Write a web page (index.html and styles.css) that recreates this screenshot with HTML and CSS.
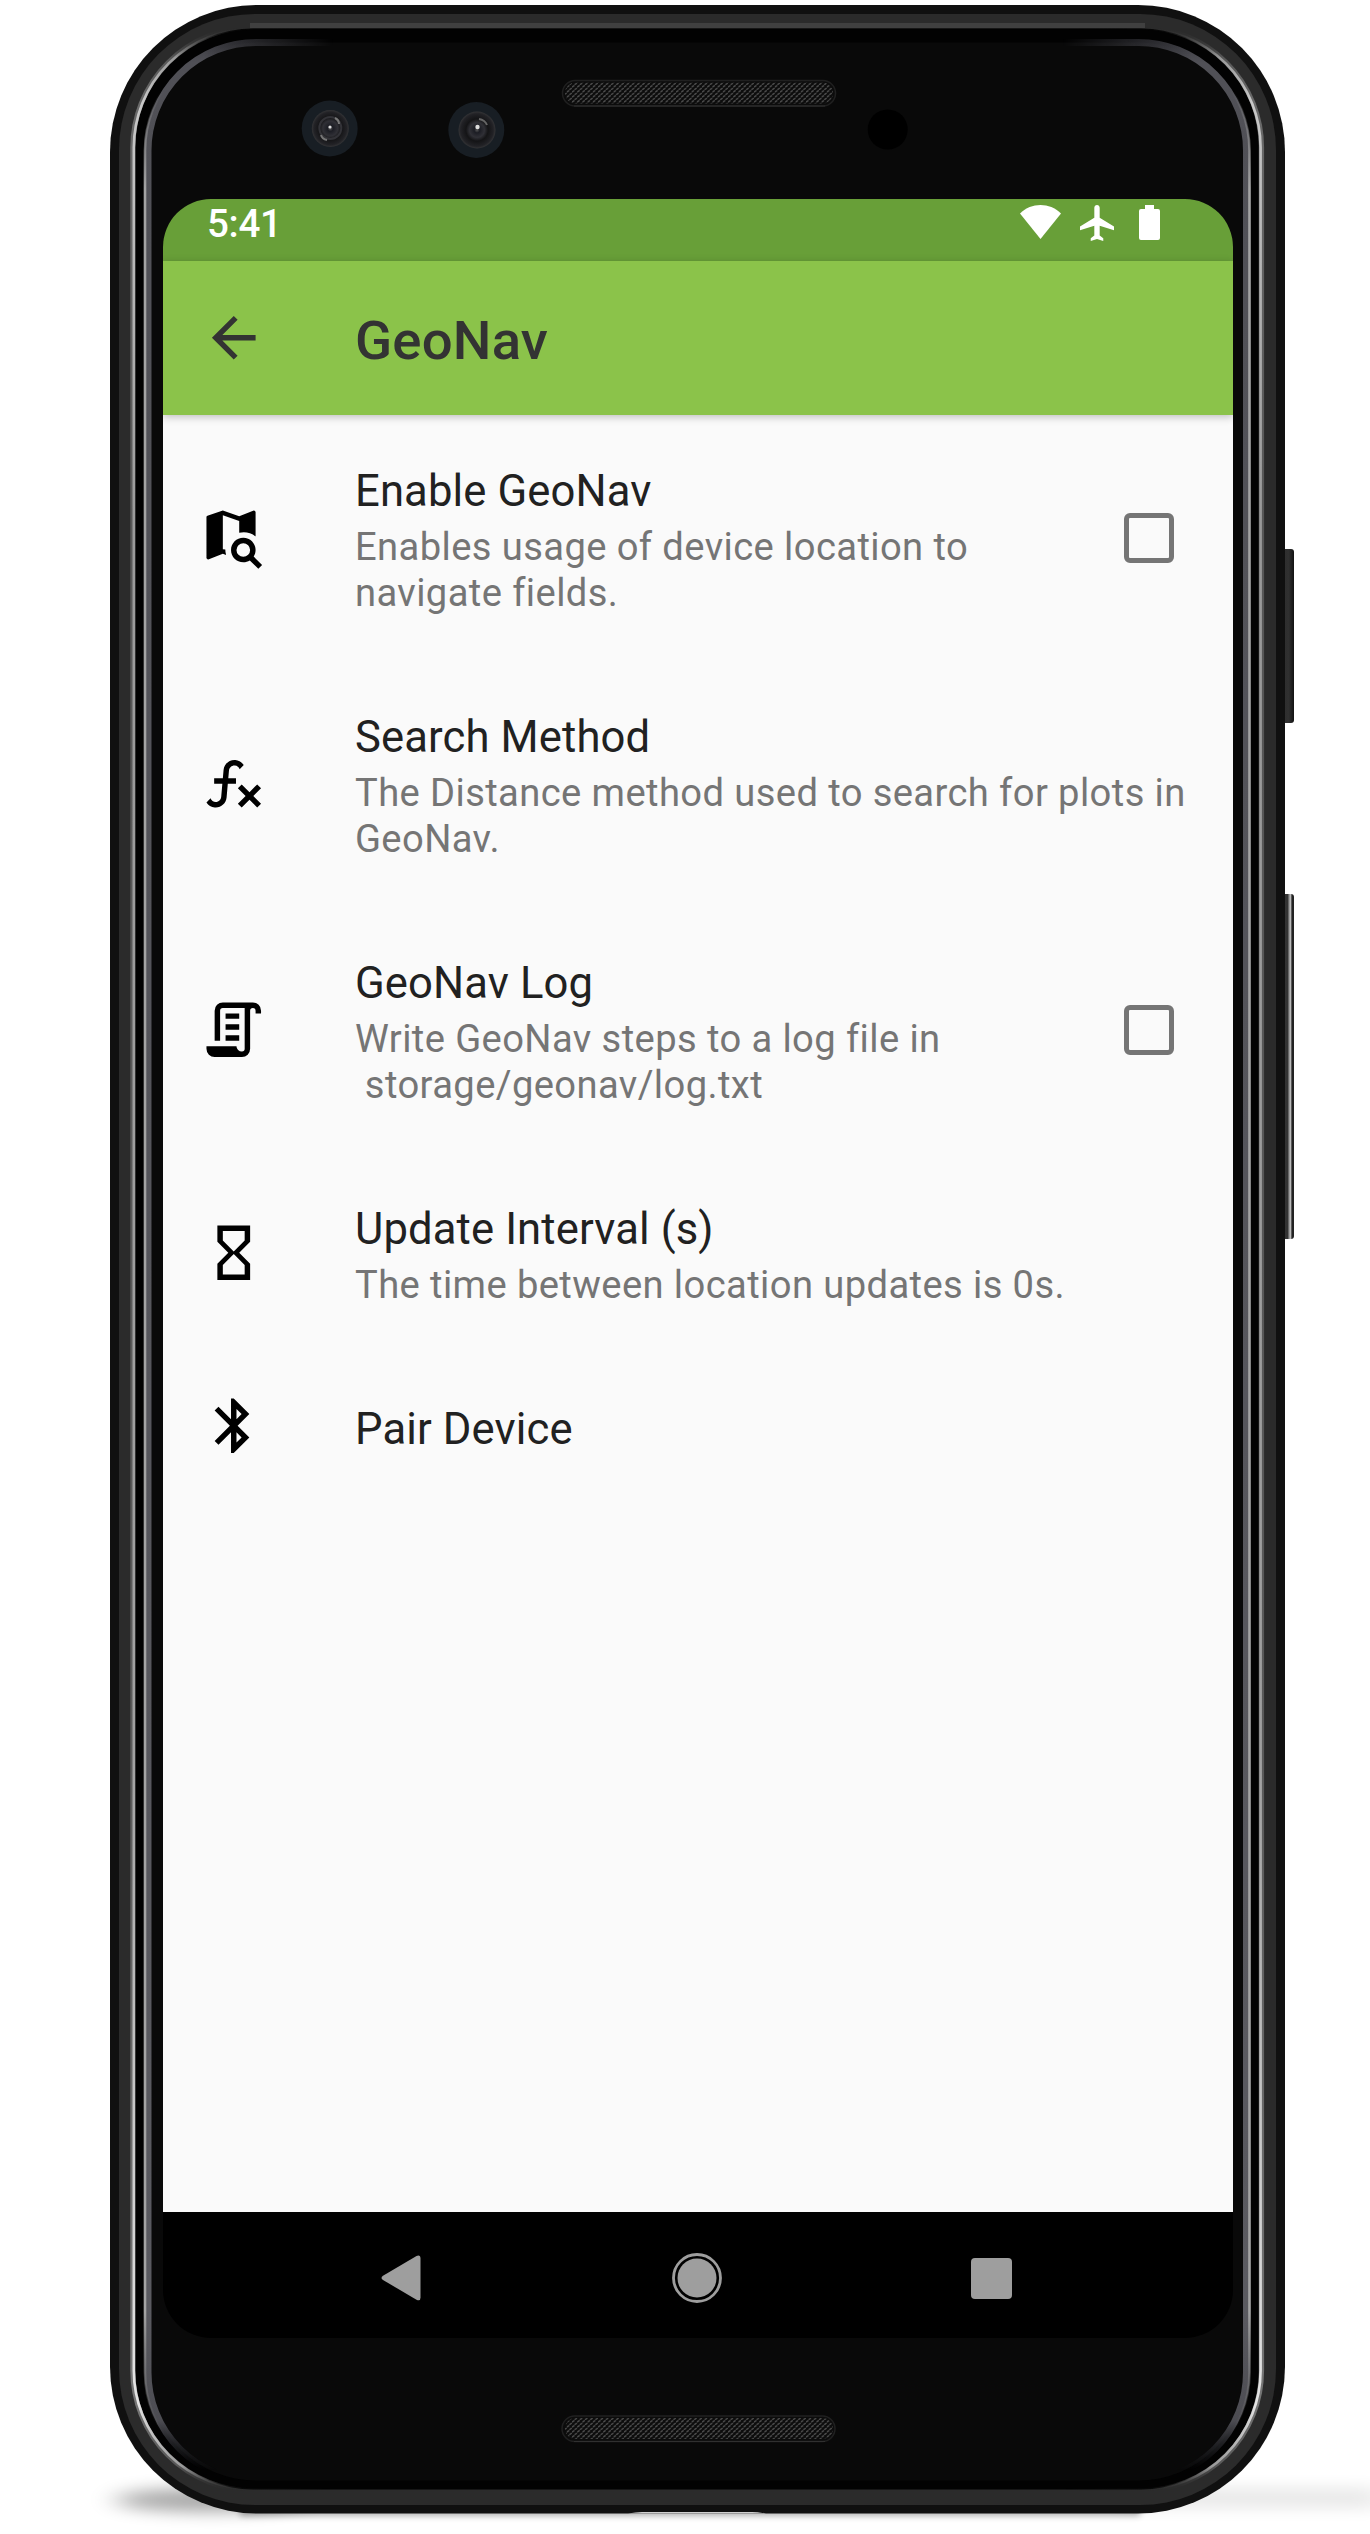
FILE: index.html
```html
<!DOCTYPE html>
<html lang="en">
<head>
<meta charset="utf-8">
<title>GeoNav</title>
<link rel="stylesheet" href="styles.css">
</head>
<body>
<div class="stage">
  <svg class="hardware" viewBox="0 0 1370 2534" aria-hidden="true">
    <defs>
      <linearGradient id="rim" gradientUnits="userSpaceOnUse" x1="0" y1="28" x2="0" y2="2491">
        <stop offset="0" stop-color="#444" stop-opacity="0"/>
        <stop offset=".012" stop-color="#999"/>
        <stop offset=".03" stop-color="#c8c8c8"/>
        <stop offset=".12" stop-color="#b0b0b0"/>
        <stop offset=".2" stop-color="#999"/>
        <stop offset=".7" stop-color="#a0a0a0"/>
        <stop offset=".85" stop-color="#c8c8c8"/>
        <stop offset=".965" stop-color="#e4e4e4"/>
        <stop offset=".99" stop-color="#999"/>
        <stop offset="1" stop-color="#444" stop-opacity="0"/>
      </linearGradient>
      <linearGradient id="glass" gradientUnits="userSpaceOnUse" x1="0" y1="38" x2="0" y2="2482">
        <stop offset="0" stop-color="#38383e"/>
        <stop offset=".01" stop-color="#505056"/>
        <stop offset=".93" stop-color="#5a5a60"/>
        <stop offset=".975" stop-color="#4c4c52"/>
        <stop offset=".995" stop-color="#22242a" stop-opacity="0"/>
      </linearGradient>
      <linearGradient id="glassEdge" gradientUnits="userSpaceOnUse" x1="0" y1="42" x2="0" y2="2482">
        <stop offset=".02" stop-color="#aaa" stop-opacity="0"/>
        <stop offset=".06" stop-color="#a4a4a4"/>
        <stop offset=".93" stop-color="#a4a4a4"/>
        <stop offset=".98" stop-color="#777" stop-opacity="0"/>
      </linearGradient>
      <linearGradient id="sides" gradientUnits="userSpaceOnUse" x1="110" y1="0" x2="1286" y2="0">
        <stop offset=".08" stop-color="#fff"/>
        <stop offset=".19" stop-color="#000"/>
        <stop offset=".81" stop-color="#000"/>
        <stop offset=".92" stop-color="#fff"/>
      </linearGradient>
      <mask id="sideMask" maskUnits="userSpaceOnUse" x="0" y="0" width="1370" height="2534">
        <rect width="1370" height="2534" fill="url(#sides)"/>
      </mask>
      <linearGradient id="button" x1="0" x2="1"><stop offset="0" stop-color="#2c2c2c"/><stop offset=".6" stop-color="#303030"/><stop offset="1" stop-color="#111"/></linearGradient>
      <linearGradient id="buttonLit" x1="0" x2="1"><stop offset="0" stop-color="#303030"/><stop offset=".5" stop-color="#333"/><stop offset=".72" stop-color="#c8c8c8"/><stop offset=".85" stop-color="#222"/><stop offset="1" stop-color="#222"/></linearGradient>
      <radialGradient id="lens"><stop offset="0" stop-color="#555"/><stop offset=".15" stop-color="#1c1d24"/><stop offset=".4" stop-color="#303036"/><stop offset=".6" stop-color="#141416"/><stop offset=".88" stop-color="#222226"/><stop offset="1" stop-color="#343436"/></radialGradient>
      <pattern id="mesh" width="5.2" height="5" patternUnits="userSpaceOnUse">
        <path d="M0 2.2 2.4.4M2.6 4.8 5 3" stroke="#4c4c4c" stroke-width="1.5"/>
      </pattern>
      <filter id="soft" x="-30%" y="-200%" width="160%" height="500%"><feGaussianBlur stdDeviation="14 8"/></filter>
      <filter id="thin" x="-5%" y="-200%" width="110%" height="500%"><feGaussianBlur stdDeviation="3"/></filter>
    </defs>

    <!-- floor shadow -->
    <ellipse cx="210" cy="2500" rx="95" ry="12" fill="#000" opacity=".34" filter="url(#soft)"/>
    <rect x="1120" y="2488" width="260" height="20" fill="#000" opacity=".09" filter="url(#soft)"/>
    <rect x="240" y="2505" width="900" height="11" fill="#000" opacity=".3" filter="url(#thin)"/>

    <!-- side buttons -->
    <rect x="1281" y="549" width="13" height="174" rx="3" fill="url(#button)"/>
    <rect x="1281" y="894" width="13" height="345" rx="3" fill="url(#buttonLit)"/>

    <!-- shell -->
    <rect x="110" y="5" width="1175" height="2508.500" rx="147" fill="#101010"/>
    <rect x="119" y="14" width="1157" height="2491" rx="136" fill="#2b2b2b"/>
    <path d="M250 25.500H1145" stroke="#404040" stroke-width="5"/>
    <rect x="135.500" y="28.500" width="1123" height="2461" rx="118" fill="#020202"/>
    <rect x="132.800" y="27.500" width="1128.800" height="2463" rx="120" fill="none" stroke="url(#rim)" stroke-width="5" opacity=".4" mask="url(#sideMask)"/>
    <rect x="133.800" y="28.500" width="1126.800" height="2461" rx="119" fill="none" stroke="url(#rim)" stroke-width="2.600" mask="url(#sideMask)"/>
    <rect x="148" y="42.500" width="1098.500" height="2438" rx="108" fill="#090909"/>
    <rect x="148" y="42.500" width="1098.500" height="2438" rx="108" fill="none" stroke="url(#glass)" stroke-width="7" mask="url(#sideMask)"/>
    <rect x="145" y="39.500" width="1104.500" height="2444" rx="111" fill="none" stroke="url(#glassEdge)" stroke-width="2.600"/>
    <path d="M628 2513.500q8-1.500 14-1.500h110q6 0 14 1.500z" fill="#d0d0d0"/>

    <!-- cameras and sensor -->
    <g>
      <circle cx="329.700" cy="128.500" r="28" fill="#181e24"/>
      <circle cx="330.300" cy="128.500" r="18.500" fill="url(#lens)"/>
      <circle cx="330.300" cy="128" r="11" fill="none" stroke="#333338" stroke-width="2"/>
      <circle cx="330" cy="127" r="1.600" fill="#ddd"/>
      <path d="M335 118q4 2 4 6M321 135q1 4 6 5" stroke="#777" stroke-width="2" fill="none"/>
      <circle cx="476.300" cy="130" r="28" fill="#181e24"/>
      <circle cx="477" cy="130" r="18.500" fill="url(#lens)"/>
      <circle cx="477.500" cy="127" r="2.200" fill="#ddd"/>
      <path d="M479 119q6 1 8 6" stroke="#666" stroke-width="2" fill="none"/>
    </g>
    <circle cx="887.700" cy="129.500" r="20" fill="#000"/>

    <!-- speakers -->
    <g stroke="#202020" stroke-width="1.500">
      <rect x="562.500" y="80.500" width="273" height="25.500" rx="12.700" fill="#0c0c0c"/>
      <rect x="562" y="2416" width="273" height="25.500" rx="12.700" fill="#0c0c0c"/>
    </g>
    <rect x="565" y="82.500" width="268" height="21" rx="10.500" fill="url(#mesh)"/>
    <rect x="565" y="2418" width="268" height="21" rx="10.500" fill="url(#mesh)"/>
    <path d="M574 106H825M574 2441.500H825" stroke="#303030"/>
  </svg>

  <main class="screen">
    <header class="status">
      <span class="clock">5:41</span>
      <div class="status-icons">
        <svg width="41" height="34" viewBox="0 0 41 34"><path d="M0 8.500C11.500-2.800 29.500-2.800 41 8.500L20.500 34z"/></svg>
        <svg width="34" height="36" viewBox="2 2 19 20"><path d="M21 16v-2l-8-5V3.500C13 2.670 12.330 2 11.500 2S10 2.670 10 3.500V9l-8 5v2l8-2.500V19l-2 1.500V22l3.500-1 3.500 1v-1.500L13 19v-5.500z"/></svg>
        <svg width="21" height="35" viewBox="0 0 21 35"><path d="M6 0h9v4h4q2 0 2 2v27q0 2-2 2H2q-2 0-2-2V6q0-2 2-2h4z"/></svg>
      </div>
    </header>

    <div class="appbar">
      <svg class="icon" viewBox="0 0 24 24"><path d="M20 11H7.830l5.590-5.590L12 4l-8 8 8 8 1.410-1.410L7.830 13H20z"/></svg>
      <h1 class="appbar-title">GeoNav</h1>
    </div>

    <section class="settings">
      <div class="row">
        <svg class="icon" viewBox="0 0 24 24"><path d="M15.500 12C18 12 20 14 20 16.500c0 .88-.25 1.710-.69 2.400L22.390 22 21 23.390l-3.120-3.070c-.69.430-1.510.68-2.380.68C13 21 11 19 11 16.500S13 12 15.500 12m0 2a2.500 2.500 0 0 0 0 5 2.500 2.500 0 0 0 0-5M19.500 2l.5.500v9c-1.700-1.400-4-1.800-6-1.300V5.900L8 3.800v12.400l.9.100q0 1 .3 2L8 17.900l-5.340 2.070L2.500 20l-.5-.5V4.400q0-.35.360-.48L8 2l6 2.100 5.340-2.070z"/></svg>
        <div class="text">
          <h2>Enable GeoNav</h2>
          <p>Enables usage of device location to<br>navigate fields.</p>
        </div>
        <span class="checkbox"></span>
      </div>

      <div class="row">
        <svg class="icon" viewBox="0 0 24 24"><path d="M12.420 5.290C11.320 5.190 10.350 6 10.250 7.110L10 10H12.820V12H9.820L9.380 17.070C9.180 19.270 7.240 20.900 5.040 20.700C3.790 20.590 2.660 19.900 2 18.830L3.500 17.330C3.830 18.380 4.960 18.970 6 18.630C6.780 18.390 7.330 17.700 7.400 16.890L7.820 12H4.820V10H8L8.270 6.930C8.460 4.730 10.390 3.100 12.600 3.280C13.860 3.390 15 4.090 15.660 5.170L14.160 6.670C13.910 5.900 13.230 5.360 12.420 5.290M22 13.650L20.590 12.240L17.760 15.070L14.930 12.240L13.500 13.650L16.350 16.500L13.500 19.310L14.930 20.720L17.760 17.890L20.590 20.720L22 19.310L19.170 16.500Z"/></svg>
        <div class="text">
          <h2>Search Method</h2>
          <p>The Distance method used to search for plots in<br>GeoNav.</p>
        </div>
      </div>

      <div class="row">
        <svg class="icon" viewBox="0 0 24 24"><path d="M15 20A1 1 0 0 0 16 19V4H8A1 1 0 0 0 7 5V16H5V5A3 3 0 0 1 8 2H19A3 3 0 0 1 22 5V6H20V5A1 1 0 0 0 19 4A1 1 0 0 0 18 5V19A3 3 0 0 1 15 22H5A3 3 0 0 1 2 19V18H13A2 2 0 0 0 15 20M9 6H14V8H9V6M9 10H14V12H9V10M9 14H14V16H9V14Z"/></svg>
        <div class="text">
          <h2>GeoNav Log</h2>
          <p>Write GeoNav steps to a log file in<br>&nbsp;storage/geonav/log.txt</p>
        </div>
        <span class="checkbox"></span>
      </div>

      <div class="row">
        <svg class="icon" viewBox="0 0 24 24"><path d="M18 22H6V16L10 12L6 8V2H18V8L14 12L18 16M8 7.500L12 11.500L16 7.500V4H8M12 12.500L8 16.500V20H16V16.500Z"/></svg>
        <div class="text">
          <h2>Update Interval (s)</h2>
          <p>The time between location updates is 0s.</p>
        </div>
      </div>

      <div class="row row-single">
        <svg class="icon" viewBox="0 0 24 24"><path d="M14.880 16.290L13 18.170V14.410M13 5.830L14.880 7.710L13 9.580M17.710 7.710L12 2H11V9.580L6.410 5L5 6.410L10.590 12L5 17.580L6.410 19L11 14.410V22H12L17.710 16.290L13.410 12Z"/></svg>
        <div class="text">
          <h2>Pair Device</h2>
        </div>
      </div>
    </section>

    <nav class="navbar">
      <svg width="40" height="46" viewBox="0 0 40 46"><path d="M35.500 1Q39.500-.6 39.500 3.500V42.500Q39.500 46.600 35.500 44.700L2 25Q-1 22.900 2 20.700z"/></svg>
      <svg class="home" width="50" height="50" viewBox="0 0 50 50"><circle cx="25" cy="25" r="19.500"/><circle class="ring" cx="25" cy="25" r="23.500"/></svg>
      <svg width="41" height="41" viewBox="0 0 41 41"><rect width="41" height="41" rx="4"/></svg>
    </nav>
  </main>
</div>
</body>
</html>
```
FILE: styles.css
```css
* { box-sizing: border-box; }

body {
  margin: 0;
  background: #fff;
  font-family: Roboto, "Liberation Sans", sans-serif;
}

h1, h2, p { margin: 0; }

.stage {
  position: relative;
  width: 1370px;
  height: 2534px;
  padding: 198.500px 137px 0 162.600px;
  overflow: hidden;
}

.hardware {
  position: absolute;
  inset: 0;
  width: 1370px;
  height: 2534px;
}

.screen {
  position: relative;
  display: flex;
  flex-direction: column;
  width: 1070.400px;
  height: 2139.500px;
  border-radius: 48px;
  overflow: hidden;
}

.status {
  display: flex;
  justify-content: space-between;
  height: 62.500px;
  padding: 6.500px 73px 0 44.400px;
  background: #689f38;
  color: #fff;
}

.clock {
  font-size: 38.500px;
  font-weight: 500;
  line-height: 38px;
  letter-spacing: -.3px;
}

.status-icons {
  display: flex;
  align-items: flex-start;
  gap: 0 19px;
}

.status-icons svg { fill: #fff; }
.status-icons svg:last-child { margin-left: 6px; }

.appbar {
  display: flex;
  align-items: center;
  height: 154px;
  padding-left: 38.400px;
  background: #8bc34a;
  box-shadow: 0 2px 8px rgba(0, 0, 0, .24);
  z-index: 1;
}

.icon {
  flex: none;
  width: 65.500px;
  height: 65.500px;
  fill: #000;
}

.appbar .icon { fill: #333; }

.appbar-title {
  margin: 4px 0 0 88.500px;
  color: #333;
  font-size: 54.500px;
  font-weight: 500;
  letter-spacing: .2px;
}

.settings {
  flex: 1;
  background: #fafafa;
}

.row {
  display: flex;
  align-items: center;
  padding-left: 38.400px;
}

.text {
  flex: 1;
  padding: 50px 0 45px 88.500px;
  white-space: nowrap;
}

.row-single .text { padding-bottom: 42px; }

.text h2 {
  color: #212121;
  font-size: 43.600px;
  font-weight: 400;
  line-height: 54px;
  letter-spacing: .13px;
}

.text p {
  margin-top: 5px;
  color: #757575;
  font-size: 38.150px;
  line-height: 46px;
  letter-spacing: .4px;
}

.checkbox {
  width: 50px;
  height: 50px;
  margin-right: 59px;
  border: 5.500px solid #757575;
  border-radius: 6px;
}

.navbar {
  display: flex;
  align-items: center;
  height: 126px;
  padding: 6px 221px 0 218px;
  justify-content: space-between;
  background: #000;
}

.navbar svg { fill: #9e9e9e; }
.navbar .home { margin-left: 2px; }
.ring { fill: none; stroke: #9e9e9e; stroke-width: 2.800; }
```
